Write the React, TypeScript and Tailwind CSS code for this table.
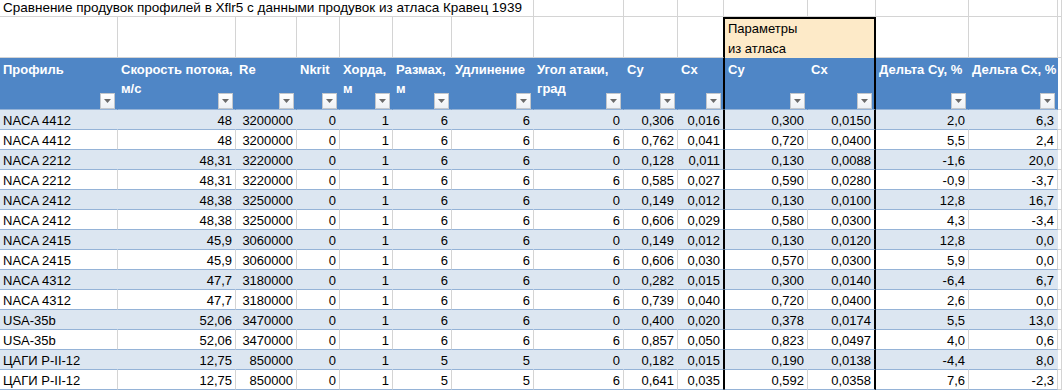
import React from 'react';

const TITLE = 'Сравнение продувок профилей в Xflr5 с данными продувок из атласа Кравец 1939';

const HEADERS: string[][] = [
  ['Профиль'],
  ['Скорость потока,', 'м/с'],
  ['Re'],
  ['Nkrit'],
  ['Хорда,', 'м'],
  ['Размах,', 'м'],
  ['Удлинение'],
  ['Угол атаки,', 'град'],
  ['Cy'],
  ['Cx'],
  ['Cy'],
  ['Cx'],
  ['Дельта Cy, %'],
  ['Дельта Сх, %'],
];

const ROWS: string[][] = [
  ['NACA 4412', '48', '3200000', '0', '1', '6', '6', '0', '0,306', '0,016', '0,300', '0,0150', '2,0', '6,3'],
  ['NACA 4412', '48', '3200000', '0', '1', '6', '6', '6', '0,762', '0,041', '0,720', '0,0400', '5,5', '2,4'],
  ['NACA 2212', '48,31', '3220000', '0', '1', '6', '6', '0', '0,128', '0,011', '0,130', '0,0088', '-1,6', '20,0'],
  ['NACA 2212', '48,31', '3220000', '0', '1', '6', '6', '6', '0,585', '0,027', '0,590', '0,0280', '-0,9', '-3,7'],
  ['NACA 2412', '48,38', '3250000', '0', '1', '6', '6', '0', '0,149', '0,012', '0,130', '0,0100', '12,8', '16,7'],
  ['NACA 2412', '48,38', '3250000', '0', '1', '6', '6', '6', '0,606', '0,029', '0,580', '0,0300', '4,3', '-3,4'],
  ['NACA 2415', '45,9', '3060000', '0', '1', '6', '6', '0', '0,149', '0,012', '0,130', '0,0120', '12,8', '0,0'],
  ['NACA 2415', '45,9', '3060000', '0', '1', '6', '6', '6', '0,606', '0,030', '0,570', '0,0300', '5,9', '0,0'],
  ['NACA 4312', '47,7', '3180000', '0', '1', '6', '6', '0', '0,282', '0,015', '0,300', '0,0140', '-6,4', '6,7'],
  ['NACA 4312', '47,7', '3180000', '0', '1', '6', '6', '6', '0,739', '0,040', '0,720', '0,0400', '2,6', '0,0'],
  ['USA-35b', '52,06', '3470000', '0', '1', '6', '6', '0', '0,400', '0,020', '0,378', '0,0174', '5,5', '13,0'],
  ['USA-35b', '52,06', '3470000', '0', '1', '6', '6', '6', '0,857', '0,050', '0,823', '0,0497', '4,0', '0,6'],
  ['ЦАГИ Р-II-12', '12,75', '850000', '0', '1', '5', '5', '0', '0,182', '0,015', '0,190', '0,0138', '-4,4', '8,0'],
  ['ЦАГИ Р-II-12', '12,75', '850000', '0', '1', '5', '5', '6', '0,641', '0,035', '0,592', '0,0358', '7,6', '-2,3'],
];

// J = 9, K = 10, L = 11: the black frame around the atlas columns
function frame(c: number, fallback: string) {
  if (c === 9) return 'border-r border-r-black';
  if (c === 10) return `border-l border-l-black ${fallback}`;
  if (c === 11) return 'border-r-2 border-r-black';
  return fallback;
}

function FilterButton() {
  return (
    <span className="absolute right-[2px] bottom-0 w-[15px] h-[16px] bg-gradient-to-b from-white to-[#eef1f5] border border-[#c3c7cc] flex items-center justify-center">
      <svg width="7" height="4" viewBox="0 0 7 4">
        <path d="M0 0 L7 0 L3.5 4 Z" fill="#6b6b6b" />
      </svg>
    </span>
  );
}

export default function App() {
  return (
    <div
      className="w-[1062px] h-[392px] bg-white overflow-hidden text-[13px] text-black"
      style={{ fontFamily: '"Liberation Sans", Arial, sans-serif' }}
    >
      <div className="grid grid-cols-[118px_118px_61px_43px_53px_59px_82px_90px_54px_46px_84px_68px_93px_89px_1fr] grid-rows-[17px_41px_52px_repeat(14,20px)]">
        {/* Title row */}
        <div className="col-span-7 border-b border-r border-[#d4d4d4] px-[3px] text-[13.5px] leading-[16px] whitespace-nowrap overflow-visible relative z-10">
          {TITLE}
        </div>
        {Array.from({ length: 8 }).map((_, i) => (
          <div key={i} className="border-b border-r border-[#d4d4d4]" />
        ))}

        {/* Row 2: atlas group label */}
        {Array.from({ length: 9 }).map((_, i) => (
          <div key={i} className="border-b border-r border-[#d4d4d4]" />
        ))}
        <div className="border-b border-r border-[#d4d4d4] border-r-black" />
        <div className="col-span-2 bg-[#fdeac8] border-t-2 border-t-black border-l border-l-black border-r-2 border-r-black px-[3px] leading-[20px] whitespace-nowrap">
          <div>Параметры</div>
          <div>из атласа</div>
        </div>
        {Array.from({ length: 3 }).map((_, i) => (
          <div key={i} className="border-b border-r border-[#d4d4d4]" />
        ))}

        {/* Header row */}
        {HEADERS.map((lines, c) => (
          <div
            key={c}
            className={`relative bg-[#4f86c6] border-b border-b-[#95b3d7] text-white font-bold px-[3px] pt-[2px] leading-[19px] whitespace-nowrap ${frame(c, 'border-r border-r-[#4f86c6]')}`}
          >
            {lines.map((l, i) => (
              <div key={i}>{l}</div>
            ))}
            <FilterButton />
          </div>
        ))}
        <div className="border-b border-r border-[#d4d4d4]" />

        {/* Data rows */}
        {ROWS.map((row, r) => {
          const banded = r % 2 === 0;
          return (
            <React.Fragment key={r}>
              {row.map((v, c) => (
                <div
                  key={c}
                  className={`border-b border-b-[#95b3d7] px-[3px] pt-[1px] leading-[19px] whitespace-nowrap overflow-hidden ${
                    c === 0 ? 'text-left' : 'text-right'
                  } ${banded ? 'bg-[#dce6f1]' : 'bg-white'} ${frame(
                    c,
                    banded ? 'border-r border-r-[#dce6f1]' : 'border-r border-r-[#d4d4d4]'
                  )}`}
                >
                  {v}
                </div>
              ))}
              <div className="border-b border-r border-[#d4d4d4]" />
            </React.Fragment>
          );
        })}
      </div>
    </div>
  );
}
